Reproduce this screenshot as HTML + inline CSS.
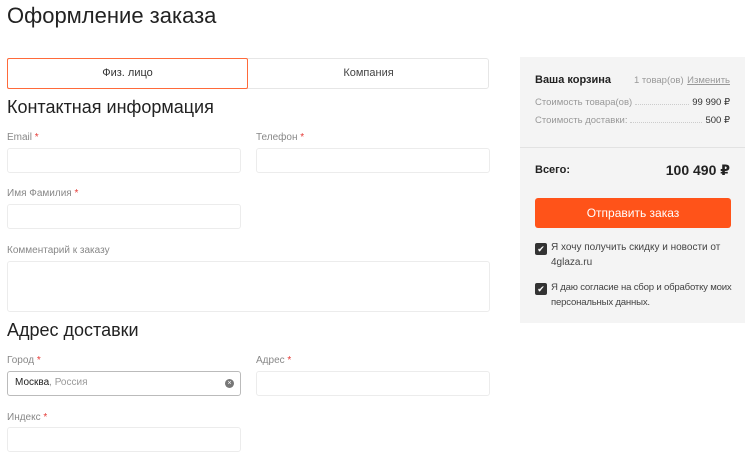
<!DOCTYPE html>
<html><head><meta charset="utf-8"><style>
*{box-sizing:border-box;margin:0;padding:0}
body{width:752px;height:463px;background:#fff;font-family:"Liberation Sans","DejaVu Sans",sans-serif;color:#222;position:relative;overflow:hidden}
.a{position:absolute;white-space:nowrap}
.lbl{font-size:10px;color:#888}
.lbl b{color:#e53935;font-weight:normal}
.inp{position:absolute;border:1px solid #ececec;border-radius:3px;background:#fff}
h1{position:absolute;left:7px;top:3px;font-size:22px;font-weight:normal;color:#222}
h2{position:absolute;left:7px;font-size:18px;font-weight:normal;color:#222}
.side{position:absolute;left:520px;top:57px;width:225px;height:266px;background:#f4f4f4}
.cb{position:absolute;left:15px;width:12px;height:12px;background:#333;border-radius:2px;color:#fff;font-size:9px;line-height:12px;text-align:center}
.ct{position:absolute;left:31px;font-size:10px;color:#444;line-height:15px;white-space:nowrap}
</style></head><body>
<h1>Оформление заказа</h1>
<div class="inp" style="left:7px;top:58px;width:482px;height:31px;border-color:#e6e6e6"></div>
<div class="a" style="left:7px;top:58px;width:241px;height:31px;border:1.5px solid #ff6a3a;border-radius:2px;font-size:11px;text-align:center;line-height:28px;color:#333">Физ. лицо</div>
<div class="a" style="left:248px;top:58px;width:241px;height:31px;font-size:11px;text-align:center;line-height:31px;color:#444">Компания</div>
<h2 style="top:97px">Контактная информация</h2>
<div class="a lbl" style="left:7px;top:132px">Email <b>*</b></div>
<div class="a lbl" style="left:256px;top:132px">Телефон <b>*</b></div>
<div class="inp" style="left:7px;top:148px;width:234px;height:25px"></div>
<div class="inp" style="left:256px;top:148px;width:234px;height:25px"></div>
<div class="a lbl" style="left:7px;top:188px">Имя Фамилия <b>*</b></div>
<div class="inp" style="left:7px;top:204px;width:234px;height:25px"></div>
<div class="a lbl" style="left:7px;top:245px">Комментарий к заказу</div>
<div class="inp" style="left:7px;top:261px;width:483px;height:51px"></div>
<h2 style="top:320px">Адрес доставки</h2>
<div class="a lbl" style="left:7px;top:355px">Город <b>*</b></div>
<div class="a lbl" style="left:256px;top:355px">Адрес <b>*</b></div>
<div class="inp" style="left:7px;top:371px;width:234px;height:25px;border-color:#bbb"></div>
<div class="a" style="left:15px;top:377px;font-size:10px;color:#222">Москва<span style="color:#999">, Россия</span></div>
<div class="a" style="left:225px;top:379px;width:9px;height:9px;border-radius:50%;background:#777;color:#fff;font-size:7px;line-height:9px;text-align:center">×</div>
<div class="inp" style="left:256px;top:371px;width:234px;height:25px"></div>
<div class="a lbl" style="left:7px;top:412px">Индекс <b>*</b></div>
<div class="inp" style="left:7px;top:427px;width:234px;height:25px"></div>
<div class="side">
<div class="a" style="left:15px;top:17px;font-size:11px;font-weight:bold;color:#222">Ваша корзина</div>
<div class="a" style="left:114px;top:18px;font-size:9.5px;color:#999">1 товар(ов)</div>
<div class="a" style="right:15px;top:18px;font-size:9.5px;color:#999;text-decoration:underline">Изменить</div>
<div class="a" style="left:15px;top:40px;width:195px;font-size:9.5px;color:#999;display:flex"><span>Стоимость товара(ов)</span><span style="flex:1;border-bottom:1px dotted #ccc;margin:0 3px 3px"></span><span style="color:#333">99 990 ₽</span></div>
<div class="a" style="left:15px;top:58px;width:195px;font-size:9.5px;color:#999;display:flex"><span>Стоимость доставки:</span><span style="flex:1;border-bottom:1px dotted #ccc;margin:0 3px 3px"></span><span style="color:#333">500 ₽</span></div>
<div class="a" style="left:0;top:90px;width:225px;height:1px;background:#e2e2e2"></div>
<div class="a" style="left:15px;top:107px;font-size:11px;font-weight:bold;color:#222">Всего:</div>
<div class="a" style="right:15px;top:105px;font-size:14px;font-weight:bold;color:#222">100 490 ₽</div>
<div class="a" style="left:15px;top:141px;width:196px;height:30px;background:#ff5319;border-radius:3px;color:#fff;font-size:12px;text-align:center;line-height:30px">Отправить заказ</div>
<div class="cb" style="top:186px">✔</div>
<div class="ct" style="top:183px">Я хочу получить скидку и новости от<br>4glaza.ru</div>
<div class="cb" style="top:226px">✔</div>
<div class="ct" style="top:223px;font-size:9.6px;letter-spacing:-0.2px">Я даю согласие на сбор и обработку моих<br>персональных данных.</div>
</div>
</body></html>
